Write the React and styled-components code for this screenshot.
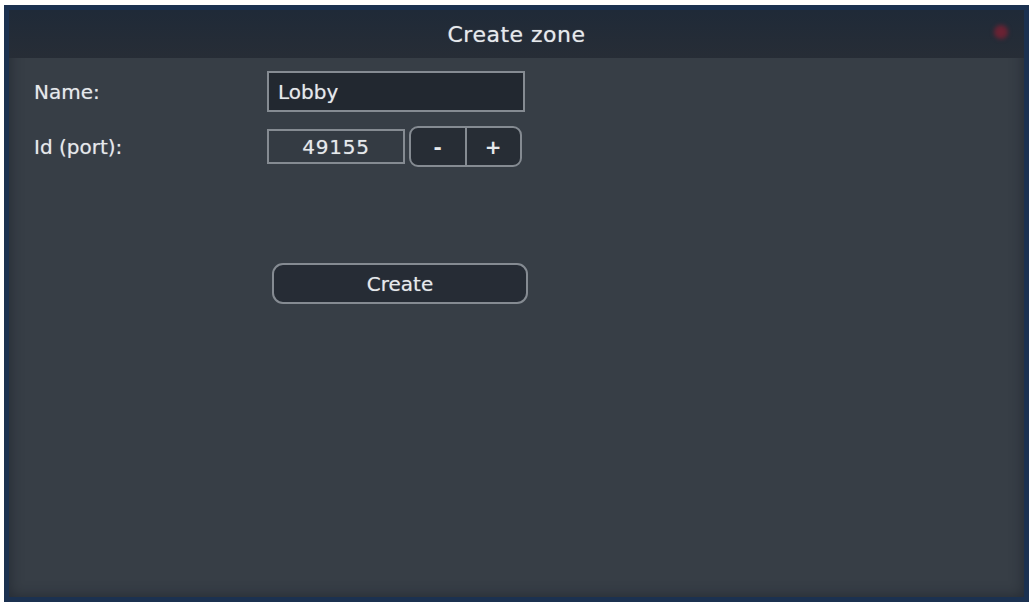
import React, { useState } from 'react';
import styled, { createGlobalStyle } from 'styled-components';

const GlobalStyle = createGlobalStyle`
  html, body {
    margin: 0;
    padding: 0;
    background: #ffffff;
  }
  body {
    font-family: 'DejaVu Sans', Verdana, sans-serif;
  }
`;

const Page = styled.div`
  width: 1031px;
  height: 604px;
  box-sizing: border-box;
  padding: 5px 2px 2px 4px;
`;

const Window = styled.div`
  height: 100%;
  box-sizing: border-box;
  display: flex;
  flex-direction: column;
  border: 5px solid #1b3150;
  background: #373e46;
  box-shadow: inset 0 0 14px rgba(20, 26, 34, 0.55);
  color: #e6e9ec;
`;

const TitleBar = styled.div`
  height: 48px;
  flex: none;
  display: flex;
  align-items: center;
  justify-content: center;
  position: relative;
  background: linear-gradient(#1f2a38, #272d36);
  font-size: 22px;
  letter-spacing: 0.5px;
  text-shadow: 0 0 1px rgba(230, 233, 236, 0.6);
`;

const CloseDot = styled.span`
  position: absolute;
  right: 16px;
  top: 15px;
  width: 14px;
  height: 14px;
  border-radius: 50%;
  background: #6a2233;
  filter: blur(2px);
`;

const Body = styled.div`
  flex: 1;
  padding: 13px 0 0 25px;
  text-shadow: 0 0 1px rgba(230, 233, 236, 0.5);
`;

const Form = styled.div`
  display: grid;
  grid-template-columns: 233px auto;
  row-gap: 14px;
  align-items: center;
  justify-content: start;
`;

const Label = styled.div`
  font-size: 20px;
`;

const Field = styled.div`
  display: flex;
  align-items: center;
  gap: 4px;
`;

const TextBox = styled.div`
  box-sizing: border-box;
  width: ${(p) => p.width}px;
  height: ${(p) => p.height}px;
  display: flex;
  align-items: center;
  justify-content: ${(p) => (p.centered ? 'center' : 'flex-start')};
  padding: 0 9px;
  border: 2px solid #858b92;
  background: ${(p) => (p.dark ? '#222830' : '#343b43')};
  font-size: 20px;
  letter-spacing: ${(p) => (p.centered ? '0.8px' : '0')};
`;

const Stepper = styled.div`
  display: flex;
  box-sizing: border-box;
  width: 113px;
  height: 41px;
  border: 2px solid #858b92;
  border-radius: 9px;
  overflow: hidden;
  background: #272d35;
`;

const StepButton = styled.button`
  flex: 1;
  border: none;
  border-left: ${(p) => (p.divider ? '2px solid #858b92' : 'none')};
  background: transparent;
  color: #e6e9ec;
  font-family: 'DejaVu Sans', Verdana, sans-serif;
  font-size: 20px;
  font-weight: bold;
  padding: 0;
`;

const CreateButton = styled.button`
  margin: 96px 0 0 238px;
  box-sizing: border-box;
  width: 256px;
  height: 41px;
  border: 2px solid #858b92;
  border-radius: 11px;
  background: #262c35;
  color: #e6e9ec;
  font-family: 'DejaVu Sans', Verdana, sans-serif;
  font-size: 20px;
  text-shadow: 0 0 1px rgba(230, 233, 236, 0.5);
`;

export default function App() {
  const [port, setPort] = useState(49155);

  return (
    <Page>
      <GlobalStyle />
      <Window>
        <TitleBar>
          Create zone
          <CloseDot />
        </TitleBar>
        <Body>
          <Form>
            <Label>Name:</Label>
            <TextBox width={258} height={41} dark>
              Lobby
            </TextBox>
            <Label>Id (port):</Label>
            <Field>
              <TextBox width={138} height={35} centered>
                {port}
              </TextBox>
              <Stepper>
                <StepButton onClick={() => setPort(port - 1)}>-</StepButton>
                <StepButton divider onClick={() => setPort(port + 1)}>
                  +
                </StepButton>
              </Stepper>
            </Field>
          </Form>
          <CreateButton>Create</CreateButton>
        </Body>
      </Window>
    </Page>
  );
}
